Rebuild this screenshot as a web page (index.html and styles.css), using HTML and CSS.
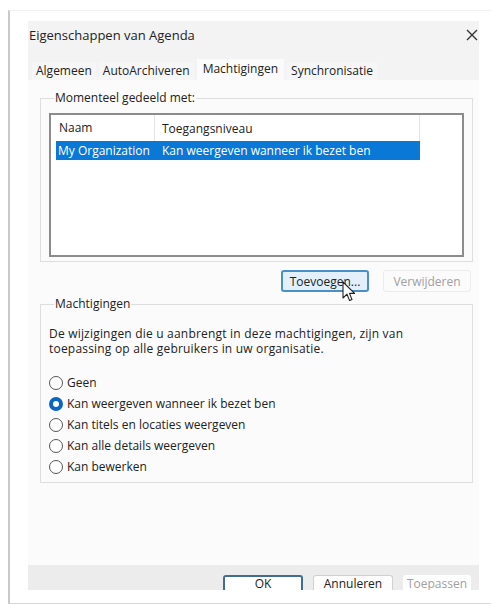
FILE: index.html
```html
<!DOCTYPE html>
<html lang="nl">
<head>
<meta charset="utf-8">
<title>Eigenschappen van Agenda</title>
<link rel="stylesheet" href="styles.css">
</head>
<body>
<div class="window">
  <div class="inner">
    <div class="titlebar">
      <span class="title">Eigenschappen van Agenda</span>
      <svg class="close" width="12" height="12" viewBox="0 0 12 12"><path d="M1 1 L11 11 M11 1 L1 11" stroke="#333" stroke-width="1.4" fill="none"/></svg>
    </div>
    <div class="tabs">
      <span class="tab">Algemeen</span>
      <span class="tab">AutoArchiveren</span>
      <span class="tab active">Machtigingen</span>
      <span class="tab">Synchronisatie</span>
    </div>
    <div class="panel">
      <fieldset class="group shared">
        <legend>Momenteel gedeeld met:</legend>
        <div class="listbox">
          <div class="lv-head">
            <span class="col-name">Naam</span>
            <span class="col-level">Toegangsniveau</span>
          </div>
          <div class="lv-row selected">
            <span class="col-name">My Organization</span>
            <span class="col-level">Kan weergeven wanneer ik bezet ben</span>
          </div>
        </div>
      </fieldset>
      <div class="actions">
        <button class="btn focus">Toevoegen...</button>
        <button class="btn disabled">Verwijderen</button>
        <svg class="cursor" width="14" height="22" viewBox="0 0 14 22"><path d="M1 1 L1 17 L5 13.2 L7.6 19.6 L10 18.6 L7.5 12.4 L12.6 12.4 Z" fill="#fff" stroke="#222" stroke-width="1.1" stroke-linejoin="round"/></svg>
      </div>
      <fieldset class="group perms">
        <legend>Machtigingen</legend>
        <p class="note">De wijzigingen die u aanbrengt in deze machtigingen, zijn van toepassing op alle gebruikers in uw organisatie.</p>
        <ul class="radios">
          <li><span class="radio"></span>Geen</li>
          <li><span class="radio on"></span>Kan weergeven wanneer ik bezet ben</li>
          <li><span class="radio"></span>Kan titels en locaties weergeven</li>
          <li><span class="radio"></span>Kan alle details weergeven</li>
          <li><span class="radio"></span>Kan bewerken</li>
        </ul>
      </fieldset>
    </div>
    <div class="footer">
      <button class="btn big default">OK</button>
      <button class="btn big">Annuleren</button>
      <button class="btn big flat disabled">Toepassen</button>
    </div>
  </div>
</div>
</body>
</html>
```
FILE: styles.css
```css
* { box-sizing: border-box; }

html, body {
  margin: 0;
  background: #fff;
}

body {
  padding: 10px 0 0 8px;
  font-family: "Open Sans", "Noto Sans", sans-serif;
  font-size: 12px;
  color: #222;
}

.window {
  width: 483px;
  height: 594px;
  background: #fff;
  border-left: 2px solid #c9c9c9;
  border-top: 1px solid #f0f0f0;
  border-bottom: 1px solid #d6d6d6;
  padding: 10px 12px 0 18px;
}

.inner {
  height: 569px;
  background: #f3f3f3;
  overflow: hidden;
  display: flex;
  flex-direction: column;
}

.titlebar {
  height: 27px;
  flex: none;
  display: flex;
  align-items: center;
  justify-content: space-between;
  padding: 0 1px;
  font-size: 13px;
}

.tabs {
  height: 32px;
  flex: none;
  display: flex;
  align-items: flex-end;
  padding-left: 4px;
  gap: 3px;
}

.tab {
  height: 18px;
  padding: 0 4px;
  line-height: 18px;
  background: #f6f6f6;
}

.tab.active {
  height: 21px;
  line-height: 20px;
  background: #fbfbfb;
  padding: 0 6px;
}

.panel {
  height: 485px;
  flex: none;
  background: #fbfbfb;
  padding: 11px 6px 0 12px;
}

.group {
  margin: 0;
  border: 1px solid #dedede;
  padding: 0;
}

.group legend {
  padding: 0 1px;
  margin-left: 5px;
  line-height: 14px;
}

.shared {
  height: 171px;
  padding: 8px 8px 0 8px;
}

.listbox {
  height: 144px;
  border: 2px solid #8c8c8c;
  background: #fff;
  padding: 0 0 0 5px;
}

.lv-head, .lv-row {
  display: flex;
  width: 364px;
  white-space: nowrap;
}

.lv-head {
  height: 26px;
  align-items: center;
  border-right: 1px solid #e6e6e6;
}

.lv-head .col-name {
  width: 99px;
  padding-left: 3px;
  border-right: 1px solid #e6e6e6;
  height: 26px;
  line-height: 26px;
}

.lv-head .col-level { padding-left: 7px; }

.lv-row {
  height: 19px;
  line-height: 19px;
}

.lv-row .col-name { width: 99px; padding-left: 2px; }
.lv-row .col-level { padding-left: 7px; }

.lv-row.selected {
  background: #0a78d7;
  color: #fff;
}

.actions {
  position: relative;
  display: flex;
  justify-content: flex-end;
  gap: 14px;
  padding: 8px 2px 0 0;
  height: 35px;
}

.btn {
  font: inherit;
  color: #222;
  height: 22px;
  padding: 0;
  border-radius: 3px;
  background: #fdfdfd;
  border: 1px solid #d0d0d0;
}

.actions .btn { width: 88px; }

.btn.focus {
  background: #e3f0fb;
  border: 2px solid #4a90c8;
}

.btn.disabled {
  color: #a0a0a0;
  border-color: #ececec;
  background: #fbfbfb;
}

.cursor {
  position: absolute;
  left: 302px;
  top: 19px;
}

.perms {
  height: 186px;
  padding: 0 8px;
}

.note {
  margin: 15px 0 0 0;
  line-height: 15px;
  width: 380px;
  letter-spacing: 0.2px;
}

.radios {
  list-style: none;
  margin: 16px 0 0 0;
  padding: 0;
}

.radios li {
  display: flex;
  align-items: center;
  height: 21px;
  gap: 4px;
}

.radio {
  width: 14px;
  height: 14px;
  border-radius: 50%;
  border: 1px solid #555;
  background: #fff;
}

.radio.on {
  border: 4px solid #0a66c2;
}

.footer {
  height: 25px;
  flex: none;
  background: #ececec;
  display: flex;
  justify-content: flex-end;
  gap: 10px;
  padding: 10px 8px 0 0;
}

/* footer buttons run past the bottom edge of the dialog body */
.btn.big {
  width: 80px;
  height: 15px;
  flex: none;
  line-height: 12px;
  border-bottom: none;
  border-radius: 3px 3px 0 0;
  padding: 1px 0 0 0;
}

.btn.default {
  border: 2px solid #3f6d96;
  border-bottom: none;
  background: #fff;
  padding-top: 0;
}

.btn.flat {
  width: 68px;
  border-color: transparent;
  background: #fff;
}
```
